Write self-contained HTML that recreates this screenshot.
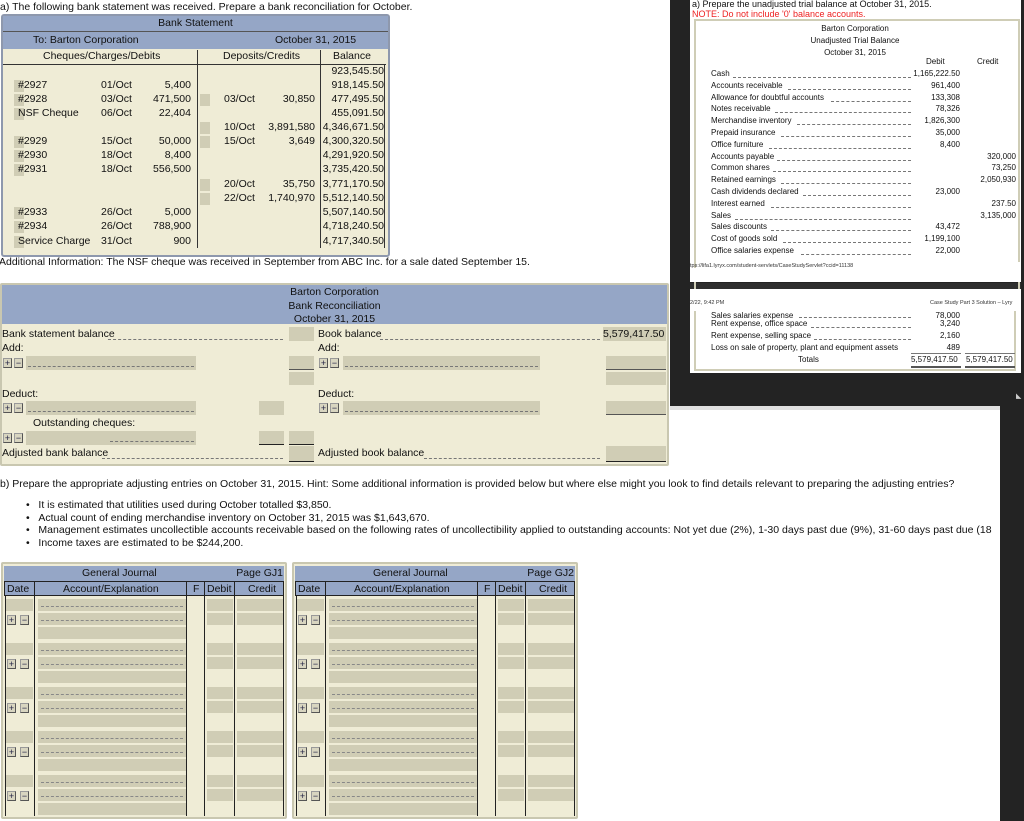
<!DOCTYPE html>
<html><head><meta charset="utf-8">
<style>
*{margin:0;padding:0;box-sizing:border-box}
body{width:1024px;height:821px;position:relative;overflow:hidden;background:#fff;font-family:"Liberation Sans",Arial,sans-serif;color:#111;font-size:10.5px}
.a{position:absolute;white-space:nowrap}
.r{text-align:right}
.c{text-align:center}
.cream{background:#efecd6}
.blue{background:#95a6c6}
.g{position:absolute;background:#d0cdb5}
.dot{position:absolute;border-bottom:1px dashed #777;height:0}
.btn{position:absolute;width:9px;height:10px;background:#d8d5c0;border:1px solid #999;border-bottom-color:#555;border-right-color:#555;font-size:9px;line-height:8px;text-align:center;color:#224}
.row{position:absolute;left:0;height:14px;width:389px}
.row span{position:absolute;top:0}
.gb{position:absolute;width:10px;height:12px;background:#d0cdb5;top:1px}
.grp{position:absolute;width:283px;height:44px}
.tb{font-size:8px;color:#111}
.grp .d{position:absolute;left:5px;top:1px;width:27px;height:12px;background:#d0cdb5}
.grp .ac{position:absolute;left:37px;width:148px;height:12px;background:#d0cdb5}
.grp .ac i{position:absolute;left:3px;right:3px;top:7px;border-bottom:1px dashed #888}
.grp .db{position:absolute;left:206px;width:26px;height:12px;background:#d0cdb5}
.grp .cr{position:absolute;left:236px;width:46px;height:12px;background:#d0cdb5}
</style></head><body>

<!-- a) bank statement -->
<div class="a" style="left:0;top:1px;font-size:10.5px">a) The following bank statement was received. Prepare a bank reconciliation for October.</div>
<div class="a cream" style="left:1px;top:14px;width:389px;height:243px;border:2px solid #8e98ad;border-radius:3px"></div>
<div class="a blue c" style="left:3px;top:16px;width:385px;height:16px;line-height:15px;border-bottom:1px solid #555">Bank Statement</div>
<div class="a blue" style="left:3px;top:32px;width:385px;height:17px;line-height:16px"><span class="a" style="left:30px">To: Barton Corporation</span><span class="a" style="left:272px">October 31, 2015</span></div>
<div class="a" style="left:3px;top:49px;width:383px;height:16px;border-bottom:1px solid #333;line-height:15px">
<span class="a" style="left:40px">Cheques/Charges/Debits</span><span class="a" style="left:220px">Deposits/Credits</span><span class="a" style="left:330px">Balance</span></div>
<div class="a" style="left:197px;top:50px;width:1px;height:198px;background:#333"></div>
<div class="a" style="left:320px;top:50px;width:1px;height:198px;background:#333"></div>
<div class="a" style="left:384px;top:64px;width:1px;height:184px;background:#333"></div>
<div class="a" style="left:3px;top:65px">
<div class="row" style="top:0"><span class="r" style="right:8px">923,545.50</span></div>
<div class="row" style="top:14px"><i class="gb" style="left:11px"></i><span style="left:15px">#2927</span><span style="left:98px">01/Oct</span><span class="r" style="right:201px">5,400</span><span class="r" style="right:8px">918,145.50</span></div>
<div class="row" style="top:28px"><i class="gb" style="left:11px"></i><span style="left:15px">#2928</span><span style="left:98px">03/Oct</span><span class="r" style="right:201px">471,500</span><i class="gb" style="left:197px"></i><span style="left:221px">03/Oct</span><span class="r" style="right:77px">30,850</span><span class="r" style="right:8px">477,495.50</span></div>
<div class="row" style="top:42px"><i class="gb" style="left:11px"></i><span style="left:15px">NSF Cheque</span><span style="left:98px">06/Oct</span><span class="r" style="right:201px">22,404</span><span class="r" style="right:8px">455,091.50</span></div>
<div class="row" style="top:56px"><i class="gb" style="left:197px"></i><span style="left:221px">10/Oct</span><span class="r" style="right:77px">3,891,580</span><span class="r" style="right:8px">4,346,671.50</span></div>
<div class="row" style="top:70px"><i class="gb" style="left:11px"></i><span style="left:15px">#2929</span><span style="left:98px">15/Oct</span><span class="r" style="right:201px">50,000</span><i class="gb" style="left:197px"></i><span style="left:221px">15/Oct</span><span class="r" style="right:77px">3,649</span><span class="r" style="right:8px">4,300,320.50</span></div>
<div class="row" style="top:84px"><i class="gb" style="left:11px"></i><span style="left:15px">#2930</span><span style="left:98px">18/Oct</span><span class="r" style="right:201px">8,400</span><span class="r" style="right:8px">4,291,920.50</span></div>
<div class="row" style="top:98px"><i class="gb" style="left:11px"></i><span style="left:15px">#2931</span><span style="left:98px">18/Oct</span><span class="r" style="right:201px">556,500</span><span class="r" style="right:8px">3,735,420.50</span></div>
<div class="row" style="top:113px"><i class="gb" style="left:197px"></i><span style="left:221px">20/Oct</span><span class="r" style="right:77px">35,750</span><span class="r" style="right:8px">3,771,170.50</span></div>
<div class="row" style="top:127px"><i class="gb" style="left:197px"></i><span style="left:221px">22/Oct</span><span class="r" style="right:77px">1,740,970</span><span class="r" style="right:8px">5,512,140.50</span></div>
<div class="row" style="top:141px"><i class="gb" style="left:11px"></i><span style="left:15px">#2933</span><span style="left:98px">26/Oct</span><span class="r" style="right:201px">5,000</span><span class="r" style="right:8px">5,507,140.50</span></div>
<div class="row" style="top:155px"><i class="gb" style="left:11px"></i><span style="left:15px">#2934</span><span style="left:98px">26/Oct</span><span class="r" style="right:201px">788,900</span><span class="r" style="right:8px">4,718,240.50</span></div>
<div class="row" style="top:170px"><i class="gb" style="left:11px"></i><span style="left:15px">Service Charge</span><span style="left:98px">31/Oct</span><span class="r" style="right:201px">900</span><span class="r" style="right:8px">4,717,340.50</span></div>
</div>
<div class="a" style="left:-1px;top:256px">Additional Information: The NSF cheque was received in September from ABC Inc. for a sale dated September 15.</div>

<!-- dark overlay area -->
<div class="a" style="left:670px;top:0;width:354px;height:406px;background:#232323"></div>
<div class="a" style="left:670px;top:406px;width:354px;height:4px;background:#e0e0e0"></div>
<div class="a" style="left:1016px;top:392px;color:#ccc;font-size:7px">◣</div>
<div class="a" style="left:690px;top:0;width:331px;height:282px;background:#fff"></div>
<div class="a" style="left:690px;top:283px;width:331px;height:6px;background:#2e2e2e"></div>
<div class="a tb" style="left:692px;top:-1px;font-size:9px">a) Prepare the unadjusted trial balance at October 31, 2015.</div>
<div class="a tb" style="left:692px;top:9px;font-size:9px;color:#e22">NOTE: Do not include '0' balance accounts.</div>
<div class="a" style="left:694px;top:19px;width:326px;height:270px;border:2px solid #cfcdb6;border-bottom:none"></div>
<div class="a tb c" style="left:780px;top:23px;width:150px;line-height:12px">Barton Corporation<br>Unadjusted Trial Balance<br>October 31, 2015</div>
<div class="a tb" style="left:926px;top:57px">Debit</div>
<div class="a tb" style="left:977px;top:57px">Credit</div>
<div class="a tb" style="left:711px;top:68px;width:305px;line-height:11.8px">
<div style="position:relative;height:11.8px">Cash<i class="dot" style="left:22px;right:105px;top:9px"></i><span class="a r" style="right:56px">1,165,222.50</span></div>
<div style="position:relative;height:11.8px">Accounts receivable<i class="dot" style="left:77px;right:105px;top:9px"></i><span class="a r" style="right:56px">961,400</span></div>
<div style="position:relative;height:11.8px">Allowance for doubtful accounts<i class="dot" style="left:120px;right:105px;top:9px"></i><span class="a r" style="right:56px">133,308</span></div>
<div style="position:relative;height:11.8px">Notes receivable<i class="dot" style="left:64px;right:105px;top:9px"></i><span class="a r" style="right:56px">78,326</span></div>
<div style="position:relative;height:11.8px">Merchandise inventory<i class="dot" style="left:86px;right:105px;top:9px"></i><span class="a r" style="right:56px">1,826,300</span></div>
<div style="position:relative;height:11.8px">Prepaid insurance<i class="dot" style="left:70px;right:105px;top:9px"></i><span class="a r" style="right:56px">35,000</span></div>
<div style="position:relative;height:11.8px">Office furniture<i class="dot" style="left:58px;right:105px;top:9px"></i><span class="a r" style="right:56px">8,400</span></div>
<div style="position:relative;height:11.8px">Accounts payable<i class="dot" style="left:66px;right:105px;top:9px"></i><span class="a r" style="right:0">320,000</span></div>
<div style="position:relative;height:11.8px">Common shares<i class="dot" style="left:62px;right:105px;top:9px"></i><span class="a r" style="right:0">73,250</span></div>
<div style="position:relative;height:11.8px">Retained earnings<i class="dot" style="left:70px;right:105px;top:9px"></i><span class="a r" style="right:0">2,050,930</span></div>
<div style="position:relative;height:11.8px">Cash dividends declared<i class="dot" style="left:92px;right:105px;top:9px"></i><span class="a r" style="right:56px">23,000</span></div>
<div style="position:relative;height:11.8px">Interest earned<i class="dot" style="left:60px;right:105px;top:9px"></i><span class="a r" style="right:0">237.50</span></div>
<div style="position:relative;height:11.8px">Sales<i class="dot" style="left:24px;right:105px;top:9px"></i><span class="a r" style="right:0">3,135,000</span></div>
<div style="position:relative;height:11.8px">Sales discounts<i class="dot" style="left:60px;right:105px;top:9px"></i><span class="a r" style="right:56px">43,472</span></div>
<div style="position:relative;height:11.8px">Cost of goods sold<i class="dot" style="left:72px;right:105px;top:9px"></i><span class="a r" style="right:56px">1,199,100</span></div>
<div style="position:relative;height:11.8px">Office salaries expense<i class="dot" style="left:90px;right:105px;top:9px"></i><span class="a r" style="right:56px">22,000</span></div>
</div>
<div class="a" style="left:690px;top:262px;width:331px;height:20px;background:#fff"></div>
<div class="a" style="left:694px;top:258px;width:2px;height:10px;background:#cfcdb6"></div>
<div class="a" style="left:690px;top:263px;font-size:5.5px;color:#333">tps://lifa1.lyryx.com/student-servlets/CaseStudyServlet?ccid=11138</div>
<div class="a" style="left:690px;top:289px;width:331px;height:84px;background:#fff"></div>
<div class="a" style="left:690px;top:300px;font-size:5.5px;color:#333">2/22, 9:42 PM</div>
<div class="a" style="left:930px;top:300px;font-size:5.5px;color:#333">Case Study Part 3 Solution – Lyry</div>
<div class="a" style="left:694px;top:311px;width:322px;height:60px;border:2px solid #cfcdb6;border-top:none"></div>
<div class="a tb" style="left:711px;top:312px;width:305px;line-height:8px">Sales salaries expense<i class="dot" style="left:88px;right:105px;top:5px;position:absolute"></i><span class="a r" style="right:56px">78,000</span></div>
<div class="a tb" style="left:711px;top:319px;width:305px;line-height:10px">Rent expense, office space<i class="dot" style="left:100px;right:105px;top:8px;position:absolute"></i><span class="a r" style="right:56px">3,240</span></div>
<div class="a tb" style="left:711px;top:331px;width:305px;line-height:10px">Rent expense, selling space<i class="dot" style="left:103px;right:105px;top:8px;position:absolute"></i><span class="a r" style="right:56px">2,160</span></div>
<div class="a tb" style="left:711px;top:343px;width:305px;line-height:10px">Loss on sale of property, plant and equipment assets<span class="a r" style="right:56px">489</span></div>
<div class="a" style="left:911px;top:353px;width:50px;height:1px;background:#777"></div>
<div class="a" style="left:965px;top:353px;width:50px;height:1px;background:#777"></div>
<div class="a tb" style="left:798px;top:355px">Totals</div>
<div class="a tb" style="left:911px;top:355px">5,579,417.50</div>
<div class="a tb" style="left:966px;top:355px">5,579,417.50</div>
<div class="a" style="left:911px;top:366px;width:50px;height:2px;background:#555"></div>
<div class="a" style="left:965px;top:366px;width:50px;height:2px;background:#555"></div>

<!-- Bank reconciliation -->
<div class="a cream" style="left:0;top:283px;width:669px;height:183px;border:2px solid #c9c7b0;border-radius:2px"></div>
<div class="a blue c" style="left:2px;top:285px;width:665px;height:39px;line-height:13.5px;padding-top:1px">Barton Corporation<br>Bank Reconciliation<br>October 31, 2015</div>
<div class="a" style="left:2px;top:328px">Bank statement balance</div><i class="dot" style="left:108px;width:175px;top:339px"></i>
<i class="g" style="left:289px;top:327px;width:25px;height:14px"></i>
<div class="a" style="left:318px;top:328px">Book balance</div><i class="dot" style="left:380px;width:220px;top:339px"></i>
<div class="a g r" style="left:603px;top:327px;width:63px;height:14px;line-height:14px;padding-right:2px">5,579,417.50</div>
<div class="a" style="left:2px;top:342px">Add:</div><div class="a" style="left:318px;top:342px">Add:</div>
<div class="btn" style="left:3px;top:358px">+</div><div class="btn" style="left:14px;top:358px">−</div>
<i class="g" style="left:26px;top:356px;width:170px;height:14px"></i><i class="dot" style="left:28px;width:166px;top:366px"></i>
<i class="g" style="left:289px;top:356px;width:25px;height:14px;border-bottom:1px solid #555"></i>
<i class="g" style="left:289px;top:372px;width:25px;height:13px"></i>
<div class="btn" style="left:319px;top:358px">+</div><div class="btn" style="left:330px;top:358px">−</div>
<i class="g" style="left:343px;top:356px;width:197px;height:14px"></i><i class="dot" style="left:345px;width:193px;top:366px"></i>
<i class="g" style="left:606px;top:356px;width:60px;height:14px;border-bottom:1px solid #555"></i>
<i class="g" style="left:606px;top:372px;width:60px;height:13px"></i>
<div class="a" style="left:2px;top:388px">Deduct:</div><div class="a" style="left:318px;top:388px">Deduct:</div>
<div class="btn" style="left:3px;top:403px">+</div><div class="btn" style="left:14px;top:403px">−</div>
<i class="g" style="left:26px;top:401px;width:170px;height:14px"></i><i class="dot" style="left:28px;width:166px;top:411px"></i>
<i class="g" style="left:259px;top:401px;width:25px;height:14px"></i>
<div class="btn" style="left:319px;top:403px">+</div><div class="btn" style="left:330px;top:403px">−</div>
<i class="g" style="left:343px;top:401px;width:197px;height:14px"></i><i class="dot" style="left:345px;width:193px;top:411px"></i>
<i class="g" style="left:606px;top:401px;width:60px;height:14px;border-bottom:1px solid #555"></i>
<div class="a" style="left:33px;top:417px">Outstanding cheques:</div>
<div class="btn" style="left:3px;top:433px">+</div><div class="btn" style="left:14px;top:433px">−</div>
<i class="g" style="left:26px;top:431px;width:170px;height:14px"></i><i class="dot" style="left:110px;width:84px;top:441px"></i>
<i class="g" style="left:259px;top:431px;width:25px;height:14px;border-bottom:1px solid #222"></i>
<i class="g" style="left:289px;top:431px;width:25px;height:14px;border-bottom:1px solid #222"></i>
<div class="a" style="left:2px;top:447px">Adjusted bank balance</div><i class="dot" style="left:102px;width:181px;top:458px"></i>
<i class="g" style="left:289px;top:446px;width:25px;height:16px;border-bottom:1px solid #222"></i>
<div class="a" style="left:318px;top:447px">Adjusted book balance</div><i class="dot" style="left:424px;width:176px;top:458px"></i>
<i class="g" style="left:606px;top:446px;width:60px;height:16px;border-bottom:1px solid #222"></i>

<!-- b) -->
<div class="a" style="left:0;top:478px">b) Prepare the appropriate adjusting entries on October 31, 2015. Hint: Some additional information is provided below but where else might you look to find details relevant to preparing the adjusting entries?</div>
<div class="a" style="left:26px;top:499px;line-height:12.5px">•&nbsp;&nbsp;&nbsp;It is estimated that utilities used during October totalled $3,850.<br>•&nbsp;&nbsp;&nbsp;Actual count of ending merchandise inventory on October 31, 2015 was $1,643,670.<br>•&nbsp;&nbsp;&nbsp;Management estimates uncollectible accounts receivable based on the following rates of uncollectibility applied to outstanding accounts: Not yet due (2%), 1-30 days past due (9%), 31-60 days past due (18<br>•&nbsp;&nbsp;&nbsp;Income taxes are estimated to be $244,200.</div>
<div class="a" style="left:1000px;top:406px;width:24px;height:415px;background:#232323"></div>

<!-- Journals -->
<div class="a" style="left:1px;top:562px;width:286px;height:259px">
<div class="a cream" style="left:0;top:0;width:286px;height:257px;border:2px solid #c9c7b0;border-radius:2px"></div>
<div class="a blue" style="left:3px;top:4px;width:280px;height:15px;line-height:14px"><span class="a" style="left:78px">General Journal</span><span class="a" style="right:1px">Page GJ1</span></div>
<div class="a blue" style="left:3px;top:19px;width:280px;height:15px;line-height:14px;border:1px solid #222">
<span class="a" style="left:2px">Date</span><span class="a" style="left:58px">Account/Explanation</span><span class="a" style="left:188px">F</span><span class="a" style="left:202px">Debit</span><span class="a" style="left:243px">Credit</span></div>
<i class="a" style="left:33px;top:19px;width:1px;height:235px;background:#222"></i>
<i class="a" style="left:185px;top:19px;width:1px;height:235px;background:#222"></i>
<i class="a" style="left:203px;top:19px;width:1px;height:235px;background:#222"></i>
<i class="a" style="left:233px;top:19px;width:1px;height:235px;background:#222"></i>
<i class="a" style="left:4px;top:34px;width:1px;height:220px;background:#222"></i>
<i class="a" style="left:282px;top:34px;width:1px;height:220px;background:#222"></i>
</div>
<div class="a" style="left:292px;top:562px;width:286px;height:259px">
<div class="a cream" style="left:0;top:0;width:286px;height:257px;border:2px solid #c9c7b0;border-radius:2px"></div>
<div class="a blue" style="left:3px;top:4px;width:280px;height:15px;line-height:14px"><span class="a" style="left:78px">General Journal</span><span class="a" style="right:1px">Page GJ2</span></div>
<div class="a blue" style="left:3px;top:19px;width:280px;height:15px;line-height:14px;border:1px solid #222">
<span class="a" style="left:2px">Date</span><span class="a" style="left:58px">Account/Explanation</span><span class="a" style="left:188px">F</span><span class="a" style="left:202px">Debit</span><span class="a" style="left:243px">Credit</span></div>
<i class="a" style="left:33px;top:19px;width:1px;height:235px;background:#222"></i>
<i class="a" style="left:185px;top:19px;width:1px;height:235px;background:#222"></i>
<i class="a" style="left:203px;top:19px;width:1px;height:235px;background:#222"></i>
<i class="a" style="left:233px;top:19px;width:1px;height:235px;background:#222"></i>
<i class="a" style="left:4px;top:34px;width:1px;height:220px;background:#222"></i>
<i class="a" style="left:282px;top:34px;width:1px;height:220px;background:#222"></i>
</div>

<div class="grp" style="left:1px;top:598px"><i class="d"></i><div class="btn" style="left:6px;top:17px">+</div><div class="btn" style="left:19px;top:17px">−</div><div class="ac" style="top:1px"><i></i></div><div class="ac" style="top:15px"><i></i></div><div class="ac" style="top:29px"></div><i class="db" style="top:1px"></i><i class="db" style="top:15px"></i><i class="cr" style="top:1px"></i><i class="cr" style="top:15px"></i></div>
<div class="grp" style="left:1px;top:642px"><i class="d"></i><div class="btn" style="left:6px;top:17px">+</div><div class="btn" style="left:19px;top:17px">−</div><div class="ac" style="top:1px"><i></i></div><div class="ac" style="top:15px"><i></i></div><div class="ac" style="top:29px"></div><i class="db" style="top:1px"></i><i class="db" style="top:15px"></i><i class="cr" style="top:1px"></i><i class="cr" style="top:15px"></i></div>
<div class="grp" style="left:1px;top:686px"><i class="d"></i><div class="btn" style="left:6px;top:17px">+</div><div class="btn" style="left:19px;top:17px">−</div><div class="ac" style="top:1px"><i></i></div><div class="ac" style="top:15px"><i></i></div><div class="ac" style="top:29px"></div><i class="db" style="top:1px"></i><i class="db" style="top:15px"></i><i class="cr" style="top:1px"></i><i class="cr" style="top:15px"></i></div>
<div class="grp" style="left:1px;top:730px"><i class="d"></i><div class="btn" style="left:6px;top:17px">+</div><div class="btn" style="left:19px;top:17px">−</div><div class="ac" style="top:1px"><i></i></div><div class="ac" style="top:15px"><i></i></div><div class="ac" style="top:29px"></div><i class="db" style="top:1px"></i><i class="db" style="top:15px"></i><i class="cr" style="top:1px"></i><i class="cr" style="top:15px"></i></div>
<div class="grp" style="left:1px;top:774px"><i class="d"></i><div class="btn" style="left:6px;top:17px">+</div><div class="btn" style="left:19px;top:17px">−</div><div class="ac" style="top:1px"><i></i></div><div class="ac" style="top:15px"><i></i></div><div class="ac" style="top:29px"></div><i class="db" style="top:1px"></i><i class="db" style="top:15px"></i><i class="cr" style="top:1px"></i><i class="cr" style="top:15px"></i></div>
<div class="grp" style="left:292px;top:598px"><i class="d"></i><div class="btn" style="left:6px;top:17px">+</div><div class="btn" style="left:19px;top:17px">−</div><div class="ac" style="top:1px"><i></i></div><div class="ac" style="top:15px"><i></i></div><div class="ac" style="top:29px"></div><i class="db" style="top:1px"></i><i class="db" style="top:15px"></i><i class="cr" style="top:1px"></i><i class="cr" style="top:15px"></i></div>
<div class="grp" style="left:292px;top:642px"><i class="d"></i><div class="btn" style="left:6px;top:17px">+</div><div class="btn" style="left:19px;top:17px">−</div><div class="ac" style="top:1px"><i></i></div><div class="ac" style="top:15px"><i></i></div><div class="ac" style="top:29px"></div><i class="db" style="top:1px"></i><i class="db" style="top:15px"></i><i class="cr" style="top:1px"></i><i class="cr" style="top:15px"></i></div>
<div class="grp" style="left:292px;top:686px"><i class="d"></i><div class="btn" style="left:6px;top:17px">+</div><div class="btn" style="left:19px;top:17px">−</div><div class="ac" style="top:1px"><i></i></div><div class="ac" style="top:15px"><i></i></div><div class="ac" style="top:29px"></div><i class="db" style="top:1px"></i><i class="db" style="top:15px"></i><i class="cr" style="top:1px"></i><i class="cr" style="top:15px"></i></div>
<div class="grp" style="left:292px;top:730px"><i class="d"></i><div class="btn" style="left:6px;top:17px">+</div><div class="btn" style="left:19px;top:17px">−</div><div class="ac" style="top:1px"><i></i></div><div class="ac" style="top:15px"><i></i></div><div class="ac" style="top:29px"></div><i class="db" style="top:1px"></i><i class="db" style="top:15px"></i><i class="cr" style="top:1px"></i><i class="cr" style="top:15px"></i></div>
<div class="grp" style="left:292px;top:774px"><i class="d"></i><div class="btn" style="left:6px;top:17px">+</div><div class="btn" style="left:19px;top:17px">−</div><div class="ac" style="top:1px"><i></i></div><div class="ac" style="top:15px"><i></i></div><div class="ac" style="top:29px"></div><i class="db" style="top:1px"></i><i class="db" style="top:15px"></i><i class="cr" style="top:1px"></i><i class="cr" style="top:15px"></i></div>
</body></html>
